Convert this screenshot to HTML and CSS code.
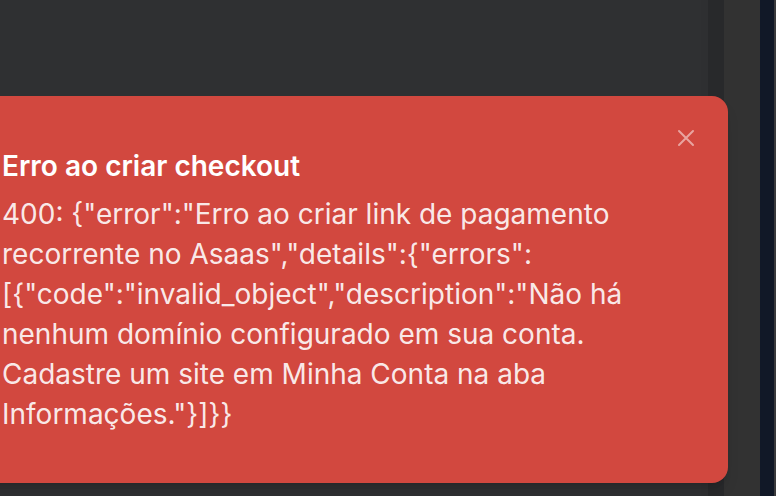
FILE: index.html
```html
<!DOCTYPE html>
<html lang="pt-BR">
<head>
<meta charset="utf-8">
<title>Erro</title>
<link rel="stylesheet" href="styles.css">
</head>
<body>
<div class="app">
  <main class="main"></main>
  <div class="scroll-gutter"></div>
  <div class="scroll-track"></div>
  <aside class="side-panel"></aside>
  <div class="side-rail"></div>
  <div class="side-edge"></div>
</div>
<div class="toast" role="alert">
  <div class="toast-content">
    <div class="toast-title">Erro ao criar checkout</div>
    <div class="toast-desc">400: {"error":"Erro ao criar link de pagamento recorrente no Asaas","details":{"errors":[{"code":"invalid_object","description":"Não há nenhum domínio configurado em sua conta. Cadastre um site em Minha Conta na aba Informações."}]}}</div>
  </div>
  <button class="toast-close" aria-label="Fechar">
    <svg width="20" height="20" viewBox="0 0 20 20" fill="none" stroke="currentColor" stroke-width="2" stroke-linecap="round"><path d="M3 3 L17 17 M17 3 L3 17"/></svg>
  </button>
</div>
</body>
</html>
```
FILE: styles.css
```css
* { box-sizing: border-box; }
html, body { margin: 0; padding: 0; height: 100%; }
body {
  font-family: Inter, "Noto Sans", sans-serif;
  background: #2f3032;
  overflow: hidden;
}
.app {
  display: flex;
  height: 496px;
  width: 776px;
}
.main { flex: 0 0 701px; background: #2f3032; }
.scroll-gutter { flex: 0 0 7px; background: #2e2f31; }
.scroll-track { flex: 0 0 16px; background: #28292b; }
.side-panel { flex: 0 0 36px; background: #323232; }
.side-rail { flex: 0 0 14px; background: #111827; }
.side-edge { flex: 1; background: #3a3a3c; }

.toast {
  position: absolute;
  left: -25px;
  top: 96px;
  width: 753px;
  height: 387px;
  background: #d2483f;
  border-radius: 16px;
  box-shadow: 0 10px 15px -3px rgba(0,0,0,0.12), 0 4px 6px -4px rgba(0,0,0,0.12);
  display: flex;
  padding: 0 0 0 27px;
}
.toast-content {
  flex: 1;
  padding-top: 50px;
  padding-right: 78px;
}
.toast-title {
  color: #ffffff;
  font-size: 28px;
  font-weight: 600;
  line-height: 40px;
}
.toast-desc {
  margin-top: 8px;
  color: rgba(255,255,255,0.9);
  font-size: 28px;
  line-height: 40px;
}
.toast-close {
  position: absolute;
  right: 32px;
  top: 32px;
  width: 20px;
  height: 20px;
  padding: 0;
  border: 0;
  background: none;
  color: rgba(255,255,255,0.5);
  cursor: pointer;
}
.toast-close svg { display: block; }
```
